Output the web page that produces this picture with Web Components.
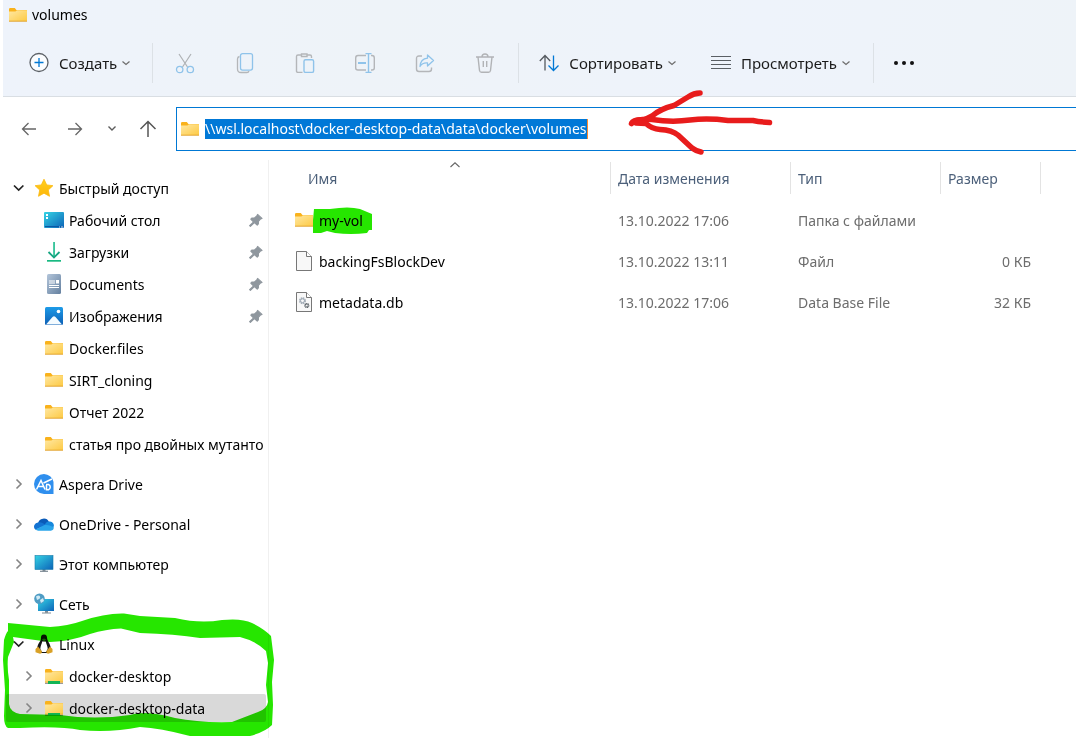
<!DOCTYPE html>
<html lang="ru">
<head>
<meta charset="utf-8">
<title>volumes</title>
<style>
html { background: #fff; }
body { margin: 0; font: 14px/20px "Noto Sans", "Open Sans", sans-serif; color: #000; }
</style>
</head>
<body>
<explorer-window></explorer-window>
<script>
const folder = `<path d="M1 4.2q0-1.2 1.2-1.2h4.6l1.6 2H19v4H1z" fill="#f9b21c"/><path d="M1 6.6h6.4L9 5.2H19V16H1z" fill="url(#f)"/><path d="M1 15.7h18v1H1z" fill="#e3a32a"/><defs><linearGradient id="f" x1="0" y1="0" x2="1" y2="1"><stop stop-color="#ffe8a3"/><stop offset="1" stop-color="#fdca45"/></linearGradient></defs>`;
const screenFill = `<defs><linearGradient id="s" x1="0" y1="0" x2="1" y2="1"><stop stop-color="#35d3e4"/><stop offset="1" stop-color="#0c63b8"/></linearGradient></defs>`;
const ICONS = {
  folder,
  netfolder: folder + `<path d="M1 17h18v1H1z" fill="#9a9a9a"/><path d="M4 15h12v3H4z" fill="#12b455"/>`,
  star: `<path d="M10 1.2l2.7 5.7 6.2.8-4.6 4.3 1.2 6.3L10 15.2l-5.5 3.1L5.700 12 1.100 7.700l6.200-.8z" fill="url(#st)" stroke="#fbb90f" stroke-width=".8" stroke-linejoin="round"/><defs><linearGradient id="st" x1="0" y1="0" x2="0" y2="1"><stop stop-color="#ffcf1f"/><stop offset="1" stop-color="#fdb70a"/></linearGradient></defs>`,
  desktop: screenFill + `<rect y="2" width="20" height="16" rx="1" fill="url(#s)"/><path d="M2 4h2v2H2zM2 7h2v2H2z" fill="#fff"/><path d="M1 16.500h18" stroke="#0a57a5"/><path d="M15 17h1m1 0h2" stroke="#fff" stroke-width=".8"/>`,
  download: `<path d="M9.200 0h1.700v15H9.200z" fill="#25bf92"/><path d="M4.500 10L10 15.500 15.500 10" fill="none" stroke="#17a682" stroke-width="1.800"/><path d="M3 18h14v1.700H3z" fill="#19b982"/>`,
  document: `<rect x="3" y="0" width="14" height="20" rx="1.500" fill="url(#dc)"/><path d="M5 7h6M5 9h6M5 11.500h10M5 13.500h10" stroke="#fff" stroke-width="1.200"/><path d="M12 6h3v3.500h-3z" fill="#fff"/><defs><linearGradient id="dc" x1="0" y1="0" x2="1" y2="1"><stop stop-color="#b3c5da"/><stop offset="1" stop-color="#64809f"/></linearGradient></defs>`,
  pictures: `<rect x="1" y="1" width="18" height="18" rx="1.500" fill="url(#p)"/><path d="M2 18.500L8.500 11q1.500-1.500 3 0l6.500 7.500z" fill="#f4fbff"/><circle cx="14.500" cy="5.500" r="1.800" fill="#fff"/><defs><linearGradient id="p" x1="0" y1="0" x2="0" y2="1"><stop stop-color="#1d9be8"/><stop offset="1" stop-color="#0d5fb5"/></linearGradient></defs>`,
  aspera: `<path d="M10 0a10 10 0 0 1 9.500 8V20H10A10 10 0 0 1 10 0z" fill="#2f8fee"/><path d="M2.500 15.500L7 6.500l4 9M4.500 12.500h5M12 10.500h2.500a2.800 2.800 0 0 1 0 5.200H12.500V11M9.500 9l8.500-4" fill="none" stroke="#fff" stroke-width="1.500"/>`,
  onedrive: `<path d="M4 9.500a5.800 5.800 0 0 1 11-1.500L11 14 4 12z" fill="#0a5bb8"/><path d="M4.500 8.500a4.100 4.100 0 0 0-3 7.200L12 11 8 8.800a5 5 0 0 0-3.500-.3z" fill="#1373d2"/><path d="M11 10.500a4.600 4.600 0 0 1 5-3 4.200 4.200 0 0 1 3.800 5.300L15 14z" fill="#1688dc"/><path d="M1.500 15.500L11 10.700q5 0 8.800 2.500a3.500 3.500 0 0 1-3 3.500H4.200a4 4 0 0 1-2.700-1.200z" fill="#2aa5ea"/>`,
  computer: screenFill + `<path d="M8.500 15h3v2.500h-3z" fill="#7d8b95"/><path d="M6 17.300h8" stroke="#7d8b95" stroke-width="1.200"/><rect x="1" y="1.500" width="18" height="14" fill="url(#s)" stroke="#167ba9" stroke-width=".6"/>`,
  network: screenFill + `<path d="M11 17h3v1.800h-3z" fill="#7d8b95"/><path d="M8 19h9" stroke="#7d8b95"/><rect x="4" y="5" width="16" height="12" fill="url(#s)"/><circle cx="5.500" cy="4.800" r="5.300" fill="#4f9cc4"/><path d="M2 2.500q3-2 4 0t-3 3.500zM6 6l3-2 1 3-3 2z" fill="#cfeaf5"/>`,
  linux: `<path d="M10 .5c-2.400 0-3.200 1.600-3.100 4.200.1 2.600-3.700 4.800-3.700 10.300l3 4h7.600l3-4c0-5.200-3.700-8-3.700-10.700C13.100 1.800 12.200.5 10 .5z" fill="#151515"/><path d="M8.200 7.500h3.600c.5 3 1.900 4.500 1.900 7.500l-1.700 3H8l-1.700-3c0-3 1.600-5 1.900-7.500z" fill="#fff"/><path d="M7.900 5.600L10 4.400l2.200 1.200L10 7.200z" fill="#8d6d35"/><path d="M1.500 15l2.500-2.500 4 5q0 2.300-2 2.300l-4.500-1.500zM18.500 15L16 12.500l-3.800 5q0 2.300 2 2.300l4.300-1.500z" fill="#d9a126"/>`,
  pin: `<path d="M12 3L17.500 8l-2 .8-2.500 2.800v3.200L11.500 16.500 8 13.200 3 18l-1-1 5-4.500L3.500 9 5 7.500h3.200L11 4.800z" fill="#8f979e" stroke="#8f979e" stroke-width="1.400" stroke-linejoin="round"/>`,
  right: `<path d="M7.500 5.500L12 10l-4.500 4.500" fill="none" stroke="#858585" stroke-width="1.600"/>`,
  open: `<path d="M5 7.500L9.700 12l4.700-4.500" fill="none" stroke="#222" stroke-width="1.700"/>`,
  down: `<path d="M6.500 8.500l3.500 3 3.500-3" fill="none" stroke="#6c6c6c" stroke-width="1.200"/>`,
  recent: `<path d="M6.500 7.500L10 11l3.500-3.500" fill="none" stroke="#5c5c5c" stroke-width="1.400"/>`,
  up: `<path d="M5.500 12L10 7.800l4.500 4.200" fill="none" stroke="#666" stroke-width="1.100"/>`,
  plus: `<circle cx="10" cy="9.500" r="9" fill="#fbfdff" stroke="#5b6066" stroke-width="1.300"/><path d="M10 5v9M5.500 9.500h9" stroke="#0078d4" stroke-width="1.300"/>`,
  cut: `<path d="M4 1l8.500 13M16 1L7.500 14" fill="none" stroke="#aeb1b4" stroke-width="1.200"/><g fill="none" stroke="#8fc3ea" stroke-width="1.300"><circle cx="4.700" cy="16.500" r="3.200"/><circle cx="15.300" cy="16.500" r="3.200"/></g>`,
  copy: `<path d="M4.500 3.500Q2.500 4 2.500 6v10q0 3.500 3.500 3.500h6q1.500 0 2-1.500" fill="none" stroke="#b4b6b9" stroke-width="1.300"/><rect x="5.500" y=".6" width="12" height="16.500" rx="2" fill="none" stroke="#8fc3ea" stroke-width="1.300"/>`,
  paste: `<path d="M7.500 19.400H3q-1.500 0-1.500-1.500V3.500Q1.500 2 3 2h3M12 2h3q1.500 0 1.500 1.500V5M6.500 1h5.500v2.500H6.500z" fill="none" stroke="#b4b6b9" stroke-width="1.400"/><rect x="9" y="6.700" width="9.600" height="12.700" rx="1.500" fill="none" stroke="#8fc3ea" stroke-width="1.400"/>`,
  rename: `<path d="M11 2.500H3Q.7 2.500.7 5v10q0 2 2.300 2h8M16 2.500h1q2.300 0 2.300 2.500v10q0 2-2.300 2h-1" fill="none" stroke="#b4b6b9" stroke-width="1.400"/><path d="M3 10h8" stroke="#8fc3ea" stroke-width="2"/><path d="M10.500.6h6M10.500 19.400h6M13.500.6v18.800" stroke="#8fc3ea" stroke-width="1.400"/>`,
  share: `<path d="M7 3H4Q1.500 3 1.500 5.500V16q0 2.500 2.500 2.500h10q2.500 0 2.500-2.500v-1.500" fill="none" stroke="#b4b6b9" stroke-width="1.400"/><path d="M12.500 2l6 5.500-6 5.500V10Q7.500 9.500 5 13.500 5.500 5.800 12.500 5.200z" fill="none" stroke="#8fc3ea" stroke-width="1.300" stroke-linejoin="round"/>`,
  trash: `<path d="M1 4h18M3 4l1.500 13.500Q4.800 19.300 6.500 19.300h7q1.700 0 2-1.800L17 4M7 4q0-3 3-3t3 3M8.300 8v6M11.700 8v6" fill="none" stroke="#b1b3b6" stroke-width="1.400"/>`,
  sort: `<path d="M6 17.500V2.500M.8 8L6 2.500 11.200 8" fill="none" stroke="#555a60" stroke-width="1.300"/><path d="M14.500 2.500v15M9.500 12.500l5 5 5-5" fill="none" stroke="#0078d4" stroke-width="1.300"/>`,
  view: `<path d="M0 3.500h20M0 7.500h20M0 11.500h20M0 15.500h20" stroke="#5a5f64" stroke-width="1.200"/>`,
  more: `<g fill="#111"><circle cx="2" cy="10" r="2"/><circle cx="10" cy="10" r="2"/><circle cx="18" cy="10" r="2"/></g>`,
  back: `<path d="M17 10H3.500M9.500 4l-6 6 6 6" fill="none" stroke="#666" stroke-width="1.300"/>`,
  forward: `<path d="M3 10h13.500M10.500 4l6 6-6 6" fill="none" stroke="#666" stroke-width="1.300"/>`,
  uplevel: `<path d="M10 18V3M2.500 10L10 2.500l7.500 7.500" fill="none" stroke="#555" stroke-width="1.500"/>`,
  file: `<path d="M2.500.5h10l5 5v14h-15z" fill="#f8f8f8" stroke="#777"/><path d="M12.500.5v5h5" fill="#fff" stroke="#777"/>`,
  db: `<path d="M2.500.5h10l5 5v14h-15z" fill="#f8f8f8" stroke="#777"/><path d="M12.500.5v5h5" fill="#fff" stroke="#777"/><circle cx="8.500" cy="8.700" r="2.500" fill="none" stroke="#a3adb8" stroke-width="2" stroke-dasharray="1.400 .57"/><circle cx="8.500" cy="8.700" r="2" fill="none" stroke="#a3adb8"/><circle cx="12.800" cy="13.500" r="1.700" fill="none" stroke="#5b6268" stroke-width="1.800" stroke-dasharray="1 .34"/>`
};

class ExplorerElement extends HTMLElement {
  constructor() {
    super();
    this.attachShadow({ mode: 'open' });
  }
  connectedCallback() {
    this.shadowRoot.innerHTML = this.render();
  }
}

customElements.define('ex-icon', class extends ExplorerElement {
  render() {
    return `<style>:host{display:block;flex:none;width:20px;height:20px}svg{display:block;width:100%;height:100%;overflow:visible}</style>
      <svg viewBox="0 0 20 20" aria-hidden="true">${ICONS[this.getAttribute('name')] || ''}</svg>`;
  }
});

customElements.define('tool-button', class extends ExplorerElement {
  render() {
    const icon = this.getAttribute('icon'), label = this.getAttribute('label'), menu = this.hasAttribute('menu');
    return `<style>
      :host{display:block;flex:none}
      button{display:flex;align-items:center;justify-content:center;gap:10px;height:40px;min-width:60px;margin:0;padding:0 10px;border:0;background:none;font:inherit;font-size:15px;color:#1b1b1b}
      .caret{margin-left:-11px}
      </style>
      <button type="button"${label ? ` aria-label="${label}"` : ''}><ex-icon name="${icon}"></ex-icon><slot></slot>${menu ? '<ex-icon class="caret" name="down"></ex-icon>' : ''}</button>`;
  }
});

customElements.define('command-bar', class extends ExplorerElement {
  render() {
    return `<style>
      :host{display:block;background:linear-gradient(100deg,#eef3fb,#eef3f8 35%,#eef3fb 70%,#eef3f8);border-bottom:1px solid #d9dee3}
      header{display:flex;align-items:center;gap:4px;height:30px;padding:0 5px}
      h1{margin:0;font:inherit}
      nav{display:flex;align-items:center;height:66px;padding-left:16px}
      i{flex:none;width:1px;height:40px;background:#dce1e6}
      .edit{display:flex;margin:0 3px 0 2px}
      .new{margin-right:6px}.sort{margin-left:10px}.view{margin-left:9px;margin-right:7px}
      </style>
      <header><ex-icon name="folder"></ex-icon><h1>volumes</h1></header>
      <nav aria-label="Команды">
        <tool-button class="new" icon="plus" menu>Создать</tool-button><i></i>
        <div class="edit">
          <tool-button icon="cut" label="Вырезать"></tool-button>
          <tool-button icon="copy" label="Копировать"></tool-button>
          <tool-button icon="paste" label="Вставить"></tool-button>
          <tool-button icon="rename" label="Переименовать"></tool-button>
          <tool-button icon="share" label="Поделиться"></tool-button>
          <tool-button icon="trash" label="Удалить"></tool-button>
        </div><i></i>
        <tool-button class="sort" icon="sort" menu>Сортировать</tool-button>
        <tool-button class="view" icon="view" menu>Просмотреть</tool-button><i></i>
        <tool-button icon="more" label="Ещё"></tool-button>
      </nav>`;
  }
});

customElements.define('address-bar', class extends ExplorerElement {
  render() {
    return `<style>
      :host{display:flex;align-items:center;position:relative;padding-top:10px}
      nav{display:flex;align-items:center;width:173px;flex:none;box-sizing:border-box;padding-left:16px}
      button{display:block;flex:none;border:0;background:none;padding:0;margin:0}
      button:nth-child(2){margin-left:26px}button:nth-child(3){margin-left:17px}button:nth-child(4){margin-left:16px}
      label{display:flex;align-items:center;gap:5px;flex:1;min-width:0;box-sizing:border-box;height:44px;padding-left:3px;border:1px solid #0078d4;border-right:0}
      input{field-sizing:content;box-sizing:border-box;height:20px;padding:0;margin:0;border:0;border-right:1px solid #ff8a2b;border-radius:0;background:#0078d7;color:#fff;font:inherit;outline:0}
      svg{position:absolute;left:620px;top:-10px;width:156px;height:70px;overflow:visible;pointer-events:none}
      </style>
      <nav aria-label="Навигация">
        <button type="button" aria-label="Назад"><ex-icon name="back"></ex-icon></button>
        <button type="button" aria-label="Вперёд"><ex-icon name="forward"></ex-icon></button>
        <button type="button" aria-label="Последние"><ex-icon name="recent"></ex-icon></button>
        <button type="button" aria-label="Вверх"><ex-icon name="uplevel"></ex-icon></button>
      </nav>
      <label><ex-icon name="folder"></ex-icon><input type="text" aria-label="Адрес" value="\\\\wsl.localhost\\docker-desktop-data\\data\\docker\\volumes"></label>
      <svg viewBox="623 87 156 70" fill="none" stroke="#e81c1c" stroke-width="5.500" stroke-linecap="round" stroke-linejoin="round" aria-hidden="true">
        <path d="M700 93Q694 93 688 97L674 105.500Q660 109 652 116L644 120Q634 119 631.500 123.500"/>
        <path d="M632 123Q640 118 652 119.500Q672 122.500 690 120Q708 118 728 120.500L753 120.500Q760 122 769.500 122.500"/>
        <path d="M636 123L646 123.500Q652 129 660 129.500Q672 130 678 135L692 148Q696 151 701 152"/>
      </svg>`;
  }
});

customElements.define('tree-row', class extends ExplorerElement {
  render() {
    const a = n => this.getAttribute(n);
    return `<style>
      :host{display:block;padding:2px 0}
      a{display:flex;align-items:center;gap:5px;height:28px;padding:0 0 0 3px;border-radius:2px;color:#000;text-decoration:none}
      :host([child]) a{padding-left:13px}
      :host([selected]) a{background:#d9d9d9}
      .chev{width:20px;flex:none}
      .label{flex:1;min-width:0;padding-top:2px;overflow:hidden;white-space:nowrap}
      .pin{width:16px;height:16px;margin-right:2px}
      </style>
      <a href="#"><span class="chev">${a('state') ? `<ex-icon name="${a('state')}"></ex-icon>` : ''}</span><ex-icon name="${a('icon')}"></ex-icon><span class="label"><slot></slot></span>${this.hasAttribute('pinned') ? '<ex-icon class="pin" name="pin"></ex-icon>' : ''}</a>`;
  }
});

customElements.define('tree-group', class extends ExplorerElement {
  render() {
    return `<style>
      :host{display:block;position:relative}
      svg{position:absolute;left:-6px;top:-17px;width:280px;height:128px;overflow:visible;pointer-events:none;mix-blend-mode:multiply}
      </style><slot></slot>${this.hasAttribute('marked') ? `
      <svg viewBox="0 611 280 128" aria-hidden="true"><path fill="#26e600" fill-rule="evenodd" d="M8 623L50 627Q68 626 82 621Q105 613 124 613.500L140 616 175 618Q200 624 222 620 242 618 252 623Q264 629 271 636L274 660 272 682 273 705 272 725Q265 732 250 736H190Q160 728 140 727 110 733 80 730 60 726 20 728H8Q4 726 4 716L5 690 3 660 4 640Q6 633 8 631z
      M13 637L50 642Q72 641 90 634 106 629 121 628.500L140 633Q175 634 200 638L240 637Q256 641 266 651L268 663 266 685 268 702Q267 709 258 712L232 722Q200 723 175 718 145 710 130 715 95 720 60 715L20 714Q10 712 9 704L9 680Q7 668 8 657L14 642z"/></svg>` : ''}`;
  }
});

customElements.define('folder-tree', class extends ExplorerElement {
  render() {
    return `<style>
      :host{display:block;box-sizing:border-box;width:266px;flex:none;border-right:1px solid #f0f0f0;padding:12px 2px 14px 3px}
      nav{display:flex;flex-direction:column;gap:8px}
      </style>
      <nav aria-label="Папки">
        <tree-group>
          <tree-row icon="star" state="open">Быстрый доступ</tree-row>
          <tree-row child pinned icon="desktop">Рабочий стол</tree-row>
          <tree-row child pinned icon="download">Загрузки</tree-row>
          <tree-row child pinned icon="document">Documents</tree-row>
          <tree-row child pinned icon="pictures">Изображения</tree-row>
          <tree-row child icon="folder">Docker.files</tree-row>
          <tree-row child icon="folder">SIRT_cloning</tree-row>
          <tree-row child icon="folder">Отчет 2022</tree-row>
          <tree-row child icon="folder">статья про двойных мутанто</tree-row>
        </tree-group>
        <tree-group><tree-row icon="aspera" state="right">Aspera Drive</tree-row></tree-group>
        <tree-group><tree-row icon="onedrive" state="right">OneDrive - Personal</tree-row></tree-group>
        <tree-group><tree-row icon="computer" state="right">Этот компьютер</tree-row></tree-group>
        <tree-group><tree-row icon="network" state="right">Сеть</tree-row></tree-group>
        <tree-group marked>
          <tree-row icon="linux" state="open">Linux</tree-row>
          <tree-row child icon="netfolder" state="right">docker-desktop</tree-row>
          <tree-row child selected icon="netfolder" state="right">docker-desktop-data</tree-row>
        </tree-group>
      </nav>`;
  }
});

customElements.define('file-list', class extends ExplorerElement {
  render() {
    const rows = [
      ['folder', 'my-vol', '13.10.2022 17:06', 'Папка с файлами', '', true],
      ['file', 'backingFsBlockDev', '13.10.2022 13:11', 'Файл', '0 КБ'],
      ['db', 'metadata.db', '13.10.2022 17:06', 'Data Base File', '32 КБ']
    ];
    const mark = '<svg viewBox="0 0 60 28" aria-hidden="true"><path fill="#26e600" d="M1 3L17 3Q36 0 47 3L59 8V24H56L54 27Q38 29 22 27L14 25 8 27H0V14z"/></svg>';
    return `<style>
      :host{display:block;flex:1;min-width:0;padding-top:2px}
      table{width:100%;border-collapse:collapse;table-layout:fixed}
      .name{width:342px}.date{width:180px}.type{width:150px}.size{width:100px}
      th{padding:0 0 5px;font-weight:400;text-align:left;color:#4c607a}
      th span{display:block;position:relative;box-sizing:border-box;height:32px;padding:7px 0 0 7px;border-right:1px solid #e3e3e3}
      th:first-child span{margin-left:31px;padding-left:8px}
      th ex-icon{position:absolute;left:0;right:0;top:-7px;margin:0 auto;width:20px}
      td{box-sizing:border-box;height:41px;padding:2px 10px 0 7px;color:#6d6d6d;white-space:nowrap}
      td:first-child{padding:0 0 0 25px;color:#000}
      td:nth-child(4){text-align:right}
      div{display:flex;align-items:center;gap:5px}
      b{font-weight:400;position:relative;padding-top:2px}
      svg{position:absolute;left:-6px;top:-3px;width:60px;height:28px;mix-blend-mode:multiply;pointer-events:none}
      </style>
      <table>
        <colgroup><col class="name"><col class="date"><col class="type"><col class="size"><col></colgroup>
        <thead><tr><th scope="col" aria-sort="ascending"><span>Имя<ex-icon name="up"></ex-icon></span></th><th scope="col"><span>Дата изменения</span></th><th scope="col"><span>Тип</span></th><th scope="col"><span>Размер</span></th><th></th></tr></thead>
        <tbody>${rows.map(([icon, name, date, type, size, marked]) => `<tr><td><div><ex-icon name="${icon}"></ex-icon><b>${name}${marked ? mark : ''}</b></div></td><td>${date}</td><td>${type}</td><td>${size}</td><td></td></tr>`).join('')}</tbody>
      </table>`;
  }
});

customElements.define('explorer-window', class extends ExplorerElement {
  render() {
    return `<style>
      :host{display:block;margin-left:3px}
      main{display:flex;padding-top:9px}
      </style>
      <command-bar></command-bar>
      <address-bar></address-bar>
      <main><folder-tree></folder-tree><file-list></file-list></main>`;
  }
});
</script>
</body>
</html>
